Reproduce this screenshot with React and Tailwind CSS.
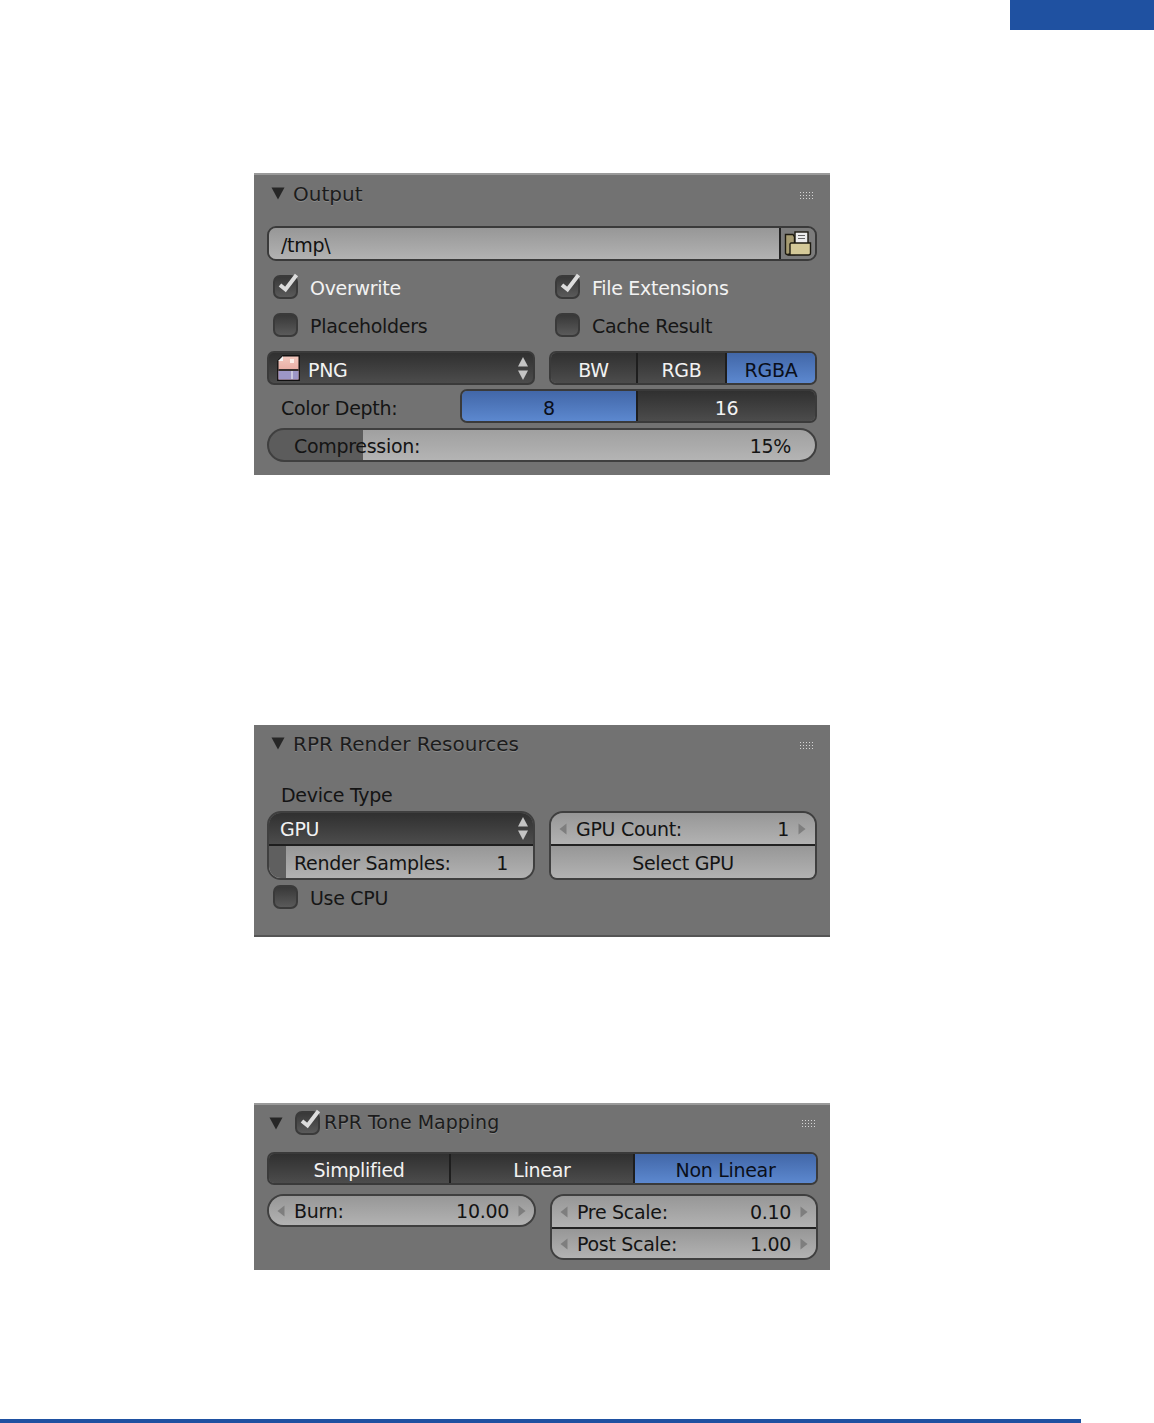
import React from 'react';

const lightBg = 'bg-[linear-gradient(#979797,#b2b2b2)]';
const darkBg = 'bg-[linear-gradient(#303030,#4c4c4c)]';
const blueBg = 'bg-[linear-gradient(#4267a8,#5c88cf)]';

function Triangle({ className = '' }) {
    return (
        <svg width="14" height="13" viewBox="0 0 14 13" className={className}>
            <path d="M0.5 0.5H13.5L7 12.5Z" fill="#262626" />
        </svg>
    );
}

function Grip() {
    return (
        <svg width="13" height="7" viewBox="0 0 13 7">
            {[0, 3, 6, 9, 12].map((x) =>
                [0, 3, 6].map((y) => <rect key={`${x}-${y}`} x={x} y={y} width="1" height="1" fill="#d6d6d6" />)
            )}
        </svg>
    );
}

function PanelHeader({ title }) {
    return (
        <div className="h-[40px] flex items-center justify-between pl-[17px] pr-[17px]">
            <div className="flex items-center gap-[8px]">
                <Triangle className="-mt-[4px]" />
                <span className="text-[#1c1c1c] text-[20px] tracking-normal -mt-[3px] [text-shadow:0_1px_0_#8a8a8a]">{title}</span>
            </div>
            <Grip />
        </div>
    );
}

function Tick() {
    return (
        <svg width="26" height="26" viewBox="0 0 26 26" className="absolute -top-[4px] left-0">
            <path d="M7 14L12.5 18.5L23.5 4" fill="none" stroke="#dcdcdc" strokeWidth="4" />
        </svg>
    );
}

function CheckBox({ checked }) {
    return (
        <span className="relative block w-[25px] h-[24px] rounded-[7px] border-2 border-[#3a3a3a] bg-[linear-gradient(#383838,#5a5a5a)]">
            {checked && <span className="absolute -left-[2px] -top-[2px]"><Tick /></span>}
        </span>
    );
}

function CheckRow({ label, checked, className = '' }) {
    return (
        <div className={`flex items-center h-[38px] pl-[6px] ${className}`}>
            <CheckBox checked={checked} />
            <span className={`ml-[12px] mt-[3px] ${checked ? 'text-[#f2f2f2]' : 'text-[#161616]'}`}>{label}</span>
        </div>
    );
}

function UpDown() {
    return (
        <svg width="12" height="25" viewBox="0 0 12 25">
            <path d="M6 1L11 10.5H1Z" fill="#c4c4c4" />
            <path d="M1 14.5H11L6 24Z" fill="#c4c4c4" />
        </svg>
    );
}

function Spin({ dir }) {
    return (
        <svg width="8" height="12" viewBox="0 0 8 12" className="shrink-0">
            <path d={dir === 'left' ? 'M7.5 0.5V11.5L0.5 6Z' : 'M0.5 0.5V11.5L7.5 6Z'} fill="#7e7e7e" />
        </svg>
    );
}

function FolderIcon() {
    return (
        <svg width="28" height="26" viewBox="0 0 28 26">
            <path d="M1.5 3.5H9L10.5 6V23.5H3A1.5 1.5 0 0 1 1.5 22Z" fill="#a79c72" stroke="#1d1a10" strokeWidth="1.4" />
            <rect x="11" y="1" width="13" height="12" fill="#ececec" stroke="#1d1a10" strokeWidth="1.4" />
            <path d="M14 4.5H21M14 7.5H21" stroke="#666" strokeWidth="1.2" />
            <path d="M7 12H26.5V22A2 2 0 0 1 24.5 24H3.5L6 23V13Z" fill="#d4c998" stroke="#1d1a10" strokeWidth="1.4" />
        </svg>
    );
}

function PngIcon() {
    return (
        <svg width="23" height="26" viewBox="0 0 23 26">
            <defs>
                <linearGradient id="pngSky" x1="0" y1="0" x2="0" y2="1">
                    <stop offset="0" stopColor="#f3c9bf" />
                    <stop offset="1" stopColor="#e09a92" />
                </linearGradient>
            </defs>
            <path d="M6 0.8H22.2V25.2H0.8V6Z" fill="url(#pngSky)" stroke="#111" strokeWidth="1.4" />
            <path d="M1 6H6V1Z" fill="#f4f4f4" />
            <rect x="13" y="4" width="4" height="4" fill="#fbeee8" />
            <rect x="1.5" y="16" width="20" height="8.5" fill="#9d96c7" />
            <path d="M1.5 15H21.5" stroke="#222" strokeWidth="1.8" />
            <rect x="14" y="16" width="2" height="8" fill="#c9c6e0" />
        </svg>
    );
}

// one field with the little arrows either side, label left and value right
function NumberField({ label, value, className = '', pr = 'pr-[8px]' }) {
    return (
        <div className={`flex items-center text-[#141414] pl-[8px] ${pr} ${lightBg} ${className}`}>
            <Spin dir="left" />
            <span className="ml-[9px] mt-[2px] flex-1">{label}</span>
            <span className="mr-[9px] mt-[2px]">{value}</span>
            <Spin dir="right" />
        </div>
    );
}

function Segments({ items, className = '' }) {
    return (
        <div className={`flex border-2 border-[#3a3a3a] rounded-[7px] overflow-hidden ${className}`}>
            {items.map((item, i) => (
                <div
                    key={item.label}
                    style={{ width: item.width }}
                    className={`flex items-center justify-center pt-[4px] ${i > 0 ? 'border-l-2 border-[#1e1e1e]' : ''} ${item.active ? `${blueBg} text-[#0a0f1a]` : `${darkBg} text-[#f2f2f2]`}`}
                >
                    {item.label}
                </div>
            ))}
        </div>
    );
}

function OutputPanel() {
    return (
        <section className="w-[576px] h-[302px] ml-[254px] mt-[143px] bg-[#727272] border-t-2 border-[#9a9a9a] pl-[13px] pr-[13px]">
            <div className="-mx-[13px]"><PanelHeader title="Output" /></div>
            <div className="flex h-[35px] mt-[11px] border-2 border-[#3a3a3a] rounded-[9px] overflow-hidden">
                <div className={`flex-1 flex items-center pl-[12px] pt-[4px] text-[#111] ${lightBg}`}>/tmp\</div>
                <div className="w-[36px] flex items-center justify-center border-l-2 border-[#222] bg-[#7c7c7c]">
                    <FolderIcon />
                </div>
            </div>
            <div className="grid grid-cols-[282px_1fr] mt-[7px]">
                <CheckRow label="Overwrite" checked />
                <CheckRow label="File Extensions" checked />
                <CheckRow label="Placeholders" />
                <CheckRow label="Cache Result" />
            </div>
            <div className="flex mt-[7px] gap-[14px]">
                <div className={`flex items-center w-[268px] h-[34px] pl-[8px] pr-[4px] border-2 border-[#3a3a3a] rounded-[7px] text-[#f2f2f2] ${darkBg}`}>
                    <PngIcon />
                    <span className="ml-[8px] mt-[5px] flex-1">PNG</span>
                    <UpDown />
                </div>
                <Segments
                    className="h-[34px] w-[268px]"
                    items={[
                        { label: 'BW', width: 85 },
                        { label: 'RGB', width: 89 },
                        { label: 'RGBA', width: 90, active: true },
                    ]}
                />
            </div>
            <div className="flex items-center h-[34px] mt-[4px]">
                <span className="w-[193px] pl-[14px] mt-[5px] text-[#141414]">Color Depth:</span>
                <Segments
                    className="h-[34px] w-[357px]"
                    items={[
                        { label: '8', width: 174, active: true },
                        { label: '16', width: 179 },
                    ]}
                />
            </div>
            <div className="flex items-center justify-between h-[34px] mt-[5px] pl-[25px] pr-[24px] pt-[2px] rounded-full border-2 border-[#3f3f3f] text-[#141414] bg-[linear-gradient(to_right,#5c5c5c_94px,transparent_94px),linear-gradient(#a0a0a0,#b4b4b4)]">
                <span>Compression:</span>
                <span>15%</span>
            </div>
        </section>
    );
}

function ResourcesPanel() {
    return (
        <section className="w-[576px] h-[212px] ml-[254px] mt-[250px] bg-[#727272] border-b-2 border-[#555] pl-[13px] pr-[13px]">
            <div className="-mx-[13px]"><PanelHeader title="RPR Render Resources" /></div>
            <div className="pl-[14px] h-[46px] pt-[21px] text-[#141414]">Device Type</div>
            <div className="flex gap-[14px]">
                <div className="w-[268px] h-[69px] border-2 border-[#3f3f3f] rounded-[14px] overflow-hidden flex flex-col">
                    <div className={`h-[33px] flex items-center pl-[11px] pr-[4px] border-b-2 border-[#1e1e1e] text-[#f2f2f2] ${darkBg}`}>
                        <span className="flex-1 mt-[2px]">GPU</span>
                        <UpDown />
                    </div>
                    <div className="flex-1 flex items-center justify-between pl-[25px] pr-[25px] pt-[2px] text-[#141414] bg-[linear-gradient(to_right,#5f5f5f_17px,transparent_17px),linear-gradient(#979797,#b2b2b2)]">
                        <span>Render Samples:</span>
                        <span>1</span>
                    </div>
                </div>
                <div className="w-[268px] h-[69px] border-2 border-[#3f3f3f] rounded-t-[14px] rounded-b-[8px] overflow-hidden flex flex-col">
                    <NumberField label="GPU Count:" value="1" pr="pr-[9px]" className="h-[33px] border-b-2 border-[#222]" />
                    <div className={`flex-1 flex items-center justify-center pt-[2px] text-[#141414] ${lightBg}`}>Select GPU</div>
                </div>
            </div>
            <CheckRow label="Use CPU" className="-mt-[2px]" />
        </section>
    );
}

function ToneMappingPanel() {
    return (
        <section className="w-[576px] h-[167px] ml-[254px] mt-[166px] bg-[#727272] border-t-2 border-[#9a9a9a] pl-[13px] pr-[12px]">
            <div className="flex items-center justify-between h-[36px] pl-[2px] pr-[3px]">
                <div className="flex items-center">
                    <Triangle />
                    <span className="ml-[12px]"><CheckBox checked /></span>
                    <span className="ml-[4px] -mt-[2px] text-[#1c1c1c] [text-shadow:0_1px_0_#8a8a8a] tracking-normal">RPR Tone Mapping</span>
                </div>
                <Grip />
            </div>
            <Segments
                className="h-[33px] mt-[11px] w-[551px]"
                items={[
                    { label: 'Simplified', width: 180 },
                    { label: 'Linear', width: 184 },
                    { label: 'Non Linear', width: 183, active: true },
                ]}
            />
            <div className="flex mt-[9px] gap-[14px]">
                <div className="w-[269px] h-[33px] self-start border-2 border-[#3f3f3f] rounded-full overflow-hidden">
                    <NumberField label="Burn:" value="10.00" className="h-full" />
                </div>
                <div className="w-[268px] h-[66px] border-2 border-[#3f3f3f] rounded-[14px] overflow-hidden flex flex-col">
                    <NumberField label="Pre Scale:" value="0.10" className="h-[33px] border-b-2 border-[#222]" />
                    <NumberField label="Post Scale:" value="1.00" className="flex-1" />
                </div>
            </div>
        </section>
    );
}

export default function App() {
    return (
        <div className="w-[1154px] h-[1423px] bg-white font-['DejaVu_Sans',sans-serif] text-[19px] tracking-[-0.3px] leading-none flex flex-col overflow-hidden">
            <div className="flex justify-end shrink-0">
                <div className="w-[144px] h-[30px] bg-[#1f51a1]" />
            </div>
            <OutputPanel />
            <ResourcesPanel />
            <ToneMappingPanel />
            <div className="w-[1081px] h-[4px] mt-auto bg-[#1f51a1] shrink-0" />
        </div>
    );
}
